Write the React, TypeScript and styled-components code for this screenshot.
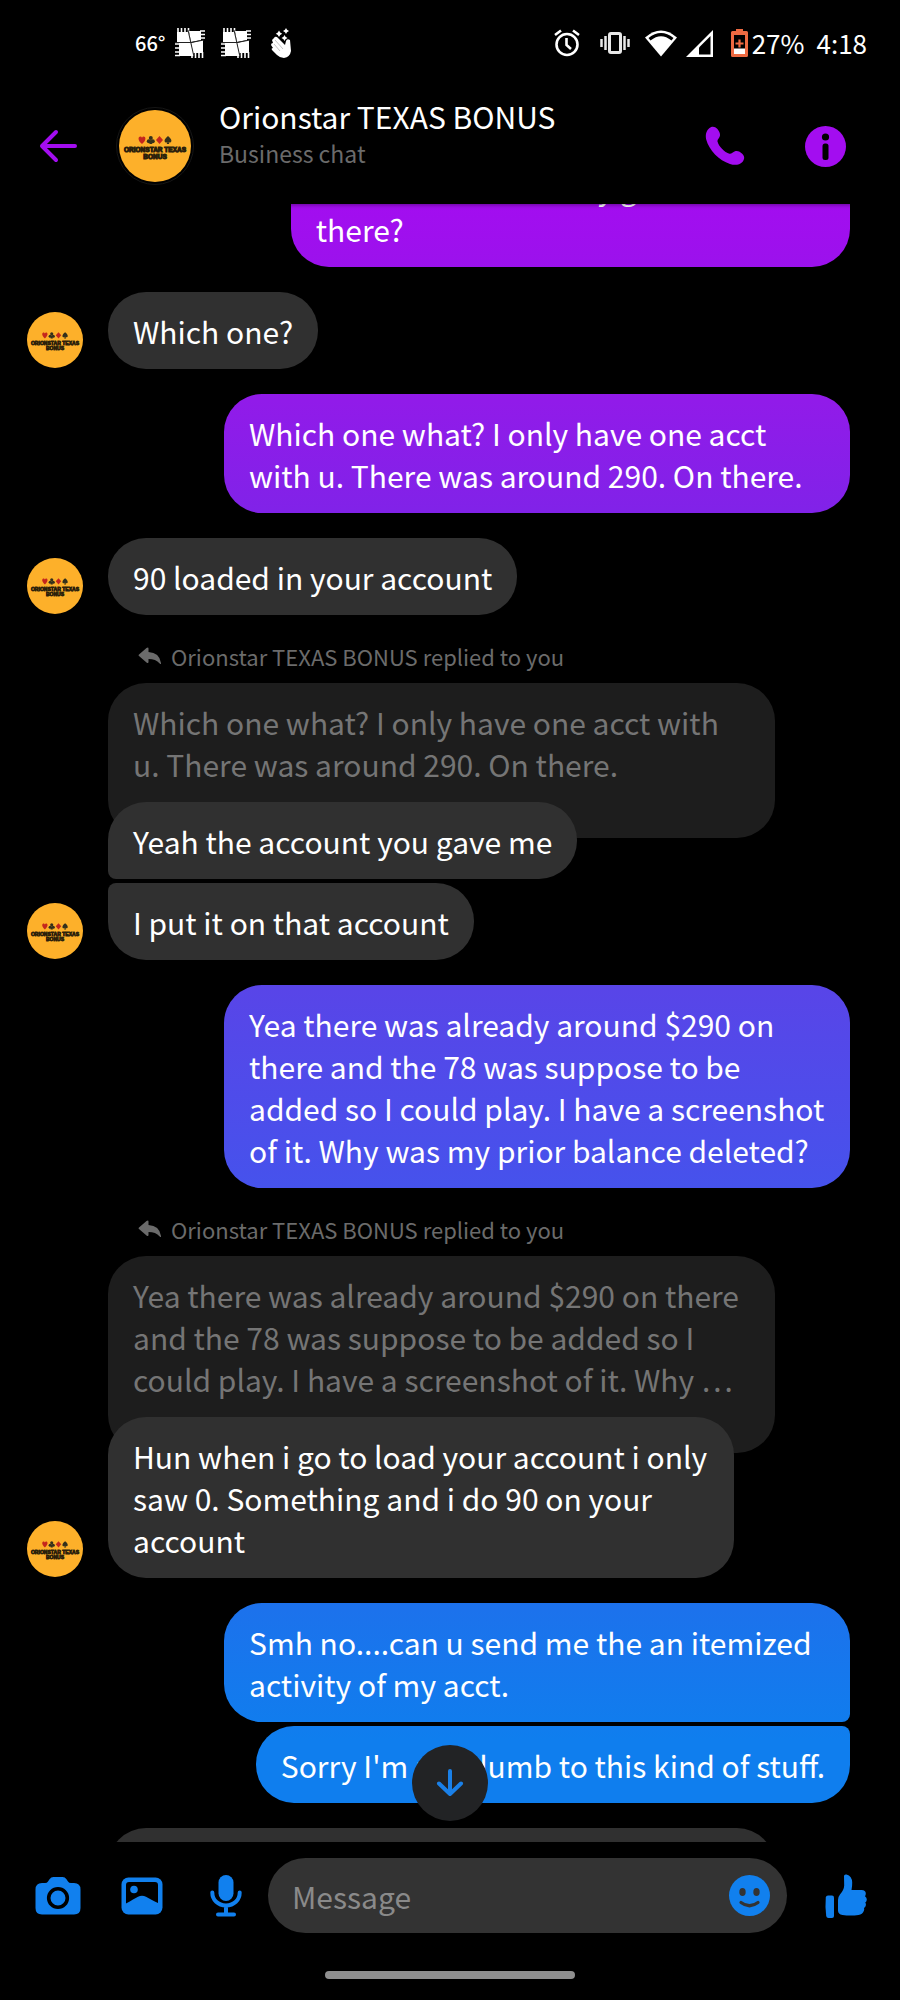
import React, { useLayoutEffect, useRef } from "react";
import styled, { createGlobalStyle, css } from "styled-components";

const PURPLE = "#a30df0";
const BLUE = "#1180ee";
const FONT = `"Noto Sans CJK SC", "Noto Sans", sans-serif`;

const GlobalStyle = createGlobalStyle`
  *, *::before, *::after { box-sizing: border-box; }
  body { margin: 0; background: #000; color: #fff; font-family: ${FONT}; }
  button, input { font: inherit; color: inherit; }
`;

const Screen = styled.div`
  display: flex;
  flex-direction: column;
  height: 100vh;
  overflow: hidden;
  background: #000;
`;

/* ---------- status bar ---------- */
const StatusBar = styled.div`
  display: flex;
  justify-content: space-between;
  align-items: center;
  flex: none;
  height: 88px;
  padding: 0 33px 2px 135px;
  font-size: 26px;
  line-height: 32px;
`;

const StatusGroup = styled.div<{ $gap: number }>`
  display: flex;
  align-items: center;
  gap: ${(p) => p.$gap}px;
`;

const Temperature = styled.span`
  width: 24px;
  font-size: 20px;
  font-weight: 500;
`;

const Battery = styled.span`
  display: flex;
  align-items: center;
  gap: 4px;
`;

/* ---------- header ---------- */
const Header = styled.header`
  position: relative;
  z-index: 1;
  display: flex;
  align-items: center;
  flex: none;
  height: 116px;
  padding: 0 54px 0 38px;
  background: #000;
  box-shadow: 0 1px 4px rgba(0, 0, 0, 0.4);
`;

const IconButton = styled.button<{ $color: string; $width?: number }>`
  display: flex;
  align-items: center;
  justify-content: center;
  flex: none;
  width: ${(p) => (p.$width ? `${p.$width}px` : "auto")};
  padding: 0;
  border: 0;
  background: none;
  color: ${(p) => p.$color};
  cursor: pointer;
`;

const HeaderAvatar = styled.span`
  display: flex;
  flex: none;
  margin: 0 25px 0 38px;
  padding: 2px;
  border: 1px solid #161616;
  border-radius: 50%;
`;

const Contact = styled.div`
  flex: 1;
  align-self: flex-start;
  min-width: 0;
  padding-top: 7px;
`;

const ContactName = styled.h1`
  margin: 0;
  font-size: 30px;
  font-weight: 400;
  line-height: 42px;
`;

const ContactKind = styled.p`
  margin: 0;
  color: #6b6b6b;
  font-size: 23px;
  line-height: 32px;
`;

const HeaderActions = styled.div`
  display: flex;
  align-items: center;
  gap: 60px;
`;

/* ---------- thread ---------- */
const ThreadFrame = styled.main`
  position: relative;
  flex: 1;
  min-height: 0;
`;

const Thread = styled.div`
  height: 100%;
  overflow-y: auto;
  scrollbar-width: none;
  padding: 0 50px 0 27px;
`;

const Group = styled.section<{ $mine?: boolean }>`
  display: flex;
  align-items: flex-end;
  justify-content: ${(p) => (p.$mine ? "flex-end" : "flex-start")};
  gap: 25px;
  margin-bottom: 25px;
`;

const GroupAvatar = styled.span`
  display: flex;
  flex: none;
  width: 56px;
  margin-bottom: 1px;
`;

const Stack = styled.div<{ $mine?: boolean }>`
  display: flex;
  flex-direction: column;
  align-items: ${(p) => (p.$mine ? "flex-end" : "flex-start")};
  gap: 4px;
  min-width: 0;
`;

const bubbleBase = css`
  margin: 0;
  padding: 18px 25px 17px;
  border-radius: 38px;
  font-size: 30px;
  line-height: 42px;
`;

const Bubble = styled.p<{ $mine?: boolean; $join?: "above" | "below" }>`
  ${bubbleBase}
  position: relative;
  max-width: 626px;
  background: #303030;
  ${(p) =>
    p.$mine &&
    css`
      background: linear-gradient(
          #a30df0 200px,
          #9b12ec 270px,
          #911be9 400px,
          #8122e8 510px,
          #5845e8 990px,
          #4652ec 1185px,
          #1c72ec 1610px,
          #0f7eee 1740px
        )
        fixed;
    `}
  ${(p) => p.$join === "below" && (p.$mine ? "border-bottom-right-radius: 8px;" : "border-bottom-left-radius: 8px;")}
  ${(p) => p.$join === "above" && (p.$mine ? "border-top-right-radius: 8px;" : "border-top-left-radius: 8px;")}
`;

const Quote = styled.blockquote`
  ${bubbleBase}
  max-width: 667px;
  margin-bottom: -40px;
  padding-bottom: 53px;
  background: #1d1d1d;
  color: #757575;
`;

const ReplyLabel = styled.div`
  display: flex;
  align-items: center;
  gap: 9px;
  margin-bottom: 7px;
  padding-left: 30px;
  color: #6b6b6b;
  font-size: 22px;
  line-height: 32px;
`;

const Card = styled.div`
  width: 667px;
  height: 240px;
  border-radius: 38px;
  background: #303030;
`;

const ScrollDown = styled.button`
  position: absolute;
  bottom: 21px;
  left: 50%;
  display: flex;
  align-items: center;
  justify-content: center;
  width: 76px;
  height: 76px;
  margin-left: -38px;
  padding: 0;
  border: 0;
  border-radius: 50%;
  background: #222325;
  color: #1a80e8;
  cursor: pointer;
`;

/* ---------- composer ---------- */
const Composer = styled.form`
  display: flex;
  align-items: center;
  flex: none;
  padding: 16px 33px 0 16px;
`;

const Tools = styled.div`
  display: flex;
  align-items: center;
`;

const Field = styled.label`
  display: flex;
  align-items: center;
  flex: 1;
  min-width: 0;
  height: 75px;
  margin-right: 38px;
  padding: 0 17px 0 24px;
  border-radius: 38px;
  background: #333;
`;

const MessageInput = styled.input`
  flex: 1;
  min-width: 0;
  height: 42px;
  padding: 0;
  border: 0;
  outline: 0;
  background: none;
  font-size: 30px;
  &::placeholder {
    color: #8a8a8a;
    opacity: 1;
  }
`;

const HomeArea = styled.div`
  display: flex;
  align-items: flex-end;
  justify-content: center;
  flex: none;
  height: 67px;
  padding-bottom: 21px;
`;

const HomeHandle = styled.span`
  width: 250px;
  height: 8px;
  border-radius: 4px;
  background: #8f8f8f;
`;

/* ---------- drawings ---------- */
const Logo = ({ size }: { size: number }) => (
  <svg width={size} height={size} viewBox="0 0 72 72" role="img" aria-label="Orionstar Texas Bonus">
    <circle cx="36" cy="36" r="36" fill="#fdb02a" />
    <path d="M23 34c-5-4-3.600-7.500-1.600-7.500q1.200 0 1.600 1.200.4-1.200 1.600-1.200c2 0 3.400 3.500-1.600 7.500z" fill="#c4261d" />
    <path d="M40.500 26l3.500 4-3.500 4-3.500-4z" fill="#c4261d" />
    <g fill="#33301c">
      <circle cx="31.800" cy="28" r="2" />
      <circle cx="29.800" cy="31.200" r="2" />
      <circle cx="33.800" cy="31.200" r="2" />
      <path d="M31.300 30h1l1 4h-3z" />
      <path d="M49 26c5 4 3.500 6.500 1.800 6.500q-.9 0-1.300-.6l.8 2.100h-2.600l.8-2.100q-.4.6-1.300.6c-1.700 0-3.200-2.500 1.800-6.500z" />
    </g>
    <g
      fill="#2b200b"
      stroke="#2b200b"
      strokeWidth="1"
      textAnchor="middle"
      fontFamily="Liberation Sans, sans-serif"
      fontWeight="700"
      fontSize="6.500"
    >
      <text x="36" y="42">ORIONSTAR TEXAS</text>
      <text x="36" y="49">BONUS</text>
    </g>
  </svg>
);

const GridIcon = () => (
  <svg width="30" height="31" viewBox="0 0 30 31" aria-hidden="true">
    <g fill="#fff">
      <path d="M2 4h12l2 10H2z" />
      <path d="M14 3h12v9l-10 2z" />
      <path d="M4 15h12l3 13H4z" />
      <path d="M16 15l12-3v13h-10z" />
    </g>
    <path d="M3 0v5M6.500 0v5M10 0v5M13.500 0v5M25 3h5M25 6.500h5M25 10h5M0 16h5M0 20h5M0 24h5M0 27.500h5M17 24v6M20.500 24v6M24 24v6M27.500 24v6" stroke="#fff" strokeWidth="1.600" />
    <path d="M13 2l6 27M0 14.500h16L29 12" stroke="#222" strokeWidth="1" fill="none" />
  </svg>
);

const HandIcon = () => (
  <svg width="30" height="31" viewBox="-4 0 30 31" fill="#fff" aria-hidden="true">
    <path d="M3 10q1-2 3-1l8 8 1-4q1-3 4-1l1 11q-1 6-7 7-4 0-7-3L1 22q-1-2 1-2L0 17q0-2 2-2l-1-3z" />
    <path d="M8 2.500l1.200 2 2 1.300-2 1.200-1.200 2-1.200-2-2-1.200 2-1.300zM15 0l1 1.800 2 1.200-2 1.200-1 1.800-1-1.800-2-1.200 2-1.200zM13.500 7l1 1.800 2 1.200-2 1.200-1 1.800-1-1.800-2-1.200 2-1.200z" />
    <path d="M4 12l8 9M3 16l6 7" stroke="#aaa" strokeWidth=".7" />
  </svg>
);

const AlarmIcon = () => (
  <svg width="26" height="28" viewBox="0 0 26 28" fill="none" stroke="#fff" strokeWidth="2.600" aria-hidden="true">
    <circle cx="13" cy="15.500" r="10.500" />
    <path d="M12.500 9v7l4.500 4M1 6l6-4.500M25 6l-6-4.500" />
  </svg>
);

const VibrateIcon = () => (
  <svg width="30" height="24" viewBox="0 0 30 24" fill="none" stroke="#e8e8e8" strokeWidth="2.500" aria-hidden="true">
    <rect x="9.500" y="2.500" width="11" height="19" rx="1.500" strokeWidth="3" />
    <path d="M5.500 5v14M1.500 8v8M24.500 5v14M28.500 8v8" />
  </svg>
);

const WifiIcon = () => (
  <svg width="32" height="27" viewBox="0 0 32 27" fill="none" aria-hidden="true">
    <path d="M0 7.500Q16-6.500 32 7.500L16 26.500z" fill="#fff" />
    <path d="M3.500 8Q16-2 28.500 8L26.500 10.500Q16 2 5.500 10.500z" fill="#000" />
  </svg>
);

const SignalIcon = () => (
  <svg width="27" height="27" viewBox="0 0 27 27" aria-hidden="true">
    <path d="M0 27L27 0v27z" fill="#fff" />
    <path d="M13 17.500L24.500 6v18.500H13z" fill="#000" />
  </svg>
);

const BatteryIcon = () => (
  <svg width="17" height="28" viewBox="0 0 17 28" aria-hidden="true">
    <path d="M5 0h7v2h3.500q1.500 0 1.500 1.500v23q0 1.500-1.500 1.500h-14Q0 28 0 26.500v-23Q0 2 1.500 2H5z" fill="#ee6a42" />
    <path d="M3 6h11v14H3z" fill="#000" />
    <path d="M3 19.500h11V25H3z" fill="#fff" />
    <path d="M8.500 10.500v8M4.500 14.500h8" stroke="#ee6a42" strokeWidth="2.200" />
  </svg>
);

const BackIcon = () => (
  <svg width="40" height="34" viewBox="0 0 40 34" fill="none" stroke="currentColor" strokeWidth="4" strokeLinecap="round" strokeLinejoin="round" aria-hidden="true">
    <path d="M37 17H4M18 3L4 17l14 14" />
  </svg>
);

const PhoneIcon = () => (
  <svg width="40" height="40" viewBox="0 0 40 40" fill="currentColor" aria-hidden="true">
    <path d="M4 2.500c2.500-2.600 6-2.200 8.200.3 1.500 1.800 3.500 4.500 2.600 7.500-.5 2-2.700 3.200-2.300 5.200C13.500 20 19.500 26.500 24.500 27.700c2.200.3 3.300-1.800 5.500-2.500 3-.7 5.300.8 7.200 2.600 2.600 2.300 2.600 5.600.2 8.200-3 3-7.500 3.600-12.400 2C14 34.500 4 24 1.200 13.500.2 9 1 5.300 4 2.500z" />
  </svg>
);

const InfoIcon = () => (
  <svg width="41" height="41" viewBox="0 0 41 41" aria-hidden="true">
    <circle cx="20.500" cy="20.500" r="20.500" fill="currentColor" />
    <circle cx="20.500" cy="11" r="3.600" fill="#000" />
    <rect x="17.500" y="17.500" width="6" height="16.500" rx="2.500" fill="#000" />
  </svg>
);

const ReplyIcon = () => (
  <svg width="24" height="18" viewBox="0 0 24 18" fill="currentColor" aria-hidden="true">
    <path d="M1 7.500L8.500 1q2-1.500 2 .8V5q11 .5 12.500 11 .2 2-1.300.4-4-4.400-11.200-4.400v2.700q0 2.300-2 .8L1 9q-1-.7 0-1.500z" />
  </svg>
);

const DownIcon = () => (
  <svg width="28" height="30" viewBox="0 0 28 30" fill="none" stroke="currentColor" strokeWidth="4" strokeLinecap="round" strokeLinejoin="round" aria-hidden="true">
    <path d="M14 3v23M3 15.500L14 26l11-10.500" />
  </svg>
);

const CameraIcon = () => (
  <svg width="46" height="38" viewBox="0 0 46 38" aria-hidden="true">
    <path d="M7 6h3q2 0 3-1.500l1.500-2.300Q16 0 18.500 0h9q2.500 0 4 2.200L33 4.500Q34 6 36 6h3q6.500 0 6.500 6.500V31q0 6.500-6.500 6.500H7Q.5 37.500.5 31V12.500Q.5 6 7 6z" fill="currentColor" />
    <circle cx="23" cy="21" r="9.300" fill="currentColor" stroke="#000" strokeWidth="3.600" />
  </svg>
);

const PictureIcon = () => (
  <svg width="42" height="38" viewBox="0 0 42 38" aria-hidden="true">
    <rect x=".5" y=".5" width="41" height="37" rx="7" fill="currentColor" />
    <path d="M5 8q0-3 3-3h26q3 0 3 3v18q-8-4-12-6.300-4-2-8 0Q13 22 5 26.500z" fill="#000" />
    <circle cx="13" cy="12.500" r="3.800" fill="currentColor" />
  </svg>
);

const MicIcon = () => (
  <svg width="32" height="42" viewBox="0 0 32 42" fill="none" stroke="currentColor" strokeWidth="4" strokeLinecap="round" aria-hidden="true">
    <rect x="8.500" y="0" width="15" height="26" rx="7.500" fill="currentColor" stroke="none" />
    <path d="M2.300 17.500C2.300 25 8 30.500 16 30.500s13.700-5.500 13.700-13M16 31v8M8 39.500h16" />
  </svg>
);

const SmileIcon = () => (
  <svg width="41" height="41" viewBox="0 0 41 41" aria-hidden="true">
    <circle cx="20.500" cy="20.500" r="20.500" fill="currentColor" />
    <ellipse cx="13.500" cy="17" rx="3.200" ry="4" fill="#333" />
    <ellipse cx="27.500" cy="17" rx="3.200" ry="4" fill="#333" />
    <path d="M12 27.500q8.500 6.500 17 0" fill="none" stroke="#333" strokeWidth="3.200" strokeLinecap="round" />
  </svg>
);

const ThumbIcon = () => (
  <svg width="42" height="44" viewBox="0 0 42 44" fill="currentColor" aria-hidden="true">
    <path d="M3 21.500h4q2 0 2 2V42q0 2-2 2H3.500q-2 0-2.300-2Q0 33 .8 23.500q.2-2 2.200-2z" />
    <path d="M19 2q.2-2 2.500-1.500 5.500 1.500 5.700 8 .1 4-.7 7.500h10q4.300.2 4.300 3.500 0 1.800-.8 2.700 1.800 1.300 1.800 3.200 0 2-1.500 3.200 1 1.300.5 3-.4 1.700-1.800 2.500.5 1.200-.1 2.600-1.500 3.800-5.400 4.300-8 1.200-16 0-4.500-.7-4.500-4.500V26q0-3.200 2-5.500 4-4.600 4.200-9z" />
  </svg>
);

const Reply = () => (
  <ReplyLabel>
    <ReplyIcon />
    <span>Orionstar TEXAS BONUS replied to you</span>
  </ReplyLabel>
);

const SenderAvatar = () => (
  <GroupAvatar>
    <Logo size={56} />
  </GroupAvatar>
);

export default function App() {
  const threadRef = useRef<HTMLDivElement>(null);

  useLayoutEffect(() => {
    if (threadRef.current) threadRef.current.scrollTop = 56;
  }, []);

  const scrollToEnd = () => threadRef.current?.scrollTo({ top: threadRef.current.scrollHeight });

  return (
    <Screen>
      <GlobalStyle />
      <StatusBar>
        <StatusGroup $gap={16}>
          <Temperature>66°</Temperature>
          <GridIcon />
          <GridIcon />
          <HandIcon />
        </StatusGroup>
        <StatusGroup $gap={12}>
          <StatusGroup $gap={18}>
            <StatusGroup $gap={15}>
              <StatusGroup $gap={20}>
                <AlarmIcon />
                <VibrateIcon />
              </StatusGroup>
              <StatusGroup $gap={9}>
                <WifiIcon />
                <SignalIcon />
              </StatusGroup>
            </StatusGroup>
            <Battery>
              <BatteryIcon />
              <span>27%</span>
            </Battery>
          </StatusGroup>
          <time>4:18</time>
        </StatusGroup>
      </StatusBar>

      <Header>
        <IconButton $color={PURPLE} type="button" aria-label="Back">
          <BackIcon />
        </IconButton>
        <HeaderAvatar>
          <Logo size={72} />
        </HeaderAvatar>
        <Contact>
          <ContactName>Orionstar TEXAS BONUS</ContactName>
          <ContactKind>Business chat</ContactKind>
        </Contact>
        <HeaderActions>
          <IconButton $color={PURPLE} type="button" aria-label="Call">
            <PhoneIcon />
          </IconButton>
          <IconButton $color={PURPLE} type="button" aria-label="Chat details">
            <InfoIcon />
          </IconButton>
        </HeaderActions>
      </Header>

      <ThreadFrame>
        <Thread ref={threadRef}>
          <Group $mine>
            <Bubble $mine>
              Where did the money go that i lost in
              <br />
              there?
            </Bubble>
          </Group>

          <Group>
            <SenderAvatar />
            <Bubble>Which one?</Bubble>
          </Group>

          <Group $mine>
            <Bubble $mine>Which one what? I only have one acct with u. There was around 290. On there.</Bubble>
          </Group>

          <Group>
            <SenderAvatar />
            <Bubble>90 loaded in your account</Bubble>
          </Group>

          <Group>
            <SenderAvatar />
            <Stack>
              <Reply />
              <Quote>Which one what? I only have one acct with u. There was around 290. On there.</Quote>
              <Bubble $join="below">Yeah the account you gave me</Bubble>
              <Bubble $join="above">I put it on that account</Bubble>
            </Stack>
          </Group>

          <Group $mine>
            <Bubble $mine>
              Yea there was already around $290 on there and the 78 was suppose to be added so I could play. I have a
              screenshot of it. Why was my prior balance deleted?
            </Bubble>
          </Group>

          <Group>
            <SenderAvatar />
            <Stack>
              <Reply />
              <Quote>
                Yea there was already around $290 on there and the 78 was suppose to be added so I could play. I have a
                screenshot of it. Why …
              </Quote>
              <Bubble>Hun when i go to load your account i only saw 0. Something and i do 90 on your account</Bubble>
            </Stack>
          </Group>

          <Group $mine>
            <Stack $mine>
              <Bubble $mine $join="below">
                Smh no....can u send me the an itemized activity of my acct.
              </Bubble>
              <Bubble $mine $join="above">
                Sorry I'm not dumb to this kind of stuff.
              </Bubble>
            </Stack>
          </Group>

          <Group>
            <GroupAvatar />
            <Card />
          </Group>
        </Thread>
        <ScrollDown type="button" aria-label="Scroll to latest message" onClick={scrollToEnd}>
          <DownIcon />
        </ScrollDown>
      </ThreadFrame>

      <Composer onSubmit={(e) => e.preventDefault()}>
        <Tools>
          <IconButton $color={BLUE} $width={84} type="button" aria-label="Camera">
            <CameraIcon />
          </IconButton>
          <IconButton $color={BLUE} $width={84} type="button" aria-label="Gallery">
            <PictureIcon />
          </IconButton>
          <IconButton $color={BLUE} $width={84} type="button" aria-label="Voice message">
            <MicIcon />
          </IconButton>
        </Tools>
        <Field>
          <MessageInput type="text" placeholder="Message" aria-label="Message" />
          <IconButton $color={BLUE} type="button" aria-label="Emoji">
            <SmileIcon />
          </IconButton>
        </Field>
        <IconButton $color={BLUE} type="submit" aria-label="Send a like">
          <ThumbIcon />
        </IconButton>
      </Composer>
      <HomeArea>
        <HomeHandle />
      </HomeArea>
    </Screen>
  );
}
